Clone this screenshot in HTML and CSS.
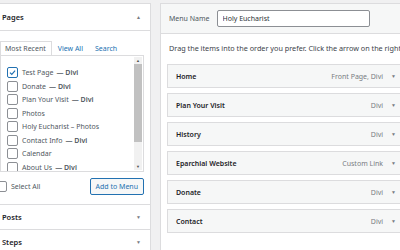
FILE: index.html
```html
<html>

<head>
  <meta content="text/html;charset=utf-8" http-equiv="Content-Type" />
  <link rel="stylesheet" href="styles.css">
</head>

<body>
  <div class="sidebar">
    <div class="section-head">
      <span class="title">Pages</span>
      <span class="caret">&#9650;</span>
    </div>

    <div class="section-body">
      <div class="tabs">
        <span class="tab active">Most Recent</span>
        <a class="tab">View All</a>
        <a class="tab">Search</a>
      </div>

      <div class="tab-panel">
        <ul class="checklist">
          <li><span class="check checked"><svg viewBox="0 0 10 10"><path d="M2.2 5.2 L4.2 7.2 L7.9 2.9" /></svg></span>Test Page <b>— Divi</b></li>
          <li><span class="check"></span>Donate <b>— Divi</b></li>
          <li><span class="check"></span>Plan Your Visit <b>— Divi</b></li>
          <li><span class="check"></span>Photos</li>
          <li><span class="check"></span>Holy Eucharist – Photos</li>
          <li><span class="check"></span>Contact Info <b>— Divi</b></li>
          <li><span class="check"></span>Calendar</li>
          <li><span class="check"></span>About Us <b>— Divi</b></li>
        </ul>
        <div class="scrollbar">
          <span class="arrow">&#9650;</span>
          <span class="thumb"></span>
          <span class="track"></span>
          <span class="arrow">&#9660;</span>
        </div>
      </div>

      <div class="actions">
        <label class="select-all"><span class="check"></span>Select All</label>
        <button class="add">Add to Menu</button>
      </div>
    </div>

    <div class="section-head closed">
      <span class="title">Posts</span>
      <span class="caret">&#9660;</span>
    </div>
    <div class="section-head closed">
      <span class="title">Steps</span>
      <span class="caret">&#9660;</span>
    </div>
  </div>

  <div class="editor">
    <div class="editor-head">
      <label class="name-label">Menu Name</label>
      <input class="name-input" type="text" value="Holy Eucharist" />
    </div>

    <div class="editor-body">
      <p class="instructions">Drag the items into the order you prefer. Click the arrow on the right of the item to reveal additional configuration options.</p>

      <ul class="menu">
        <li class="item"><span class="item-title">Home</span><span class="item-type">Front Page, Divi</span><span class="caret">&#9660;</span></li>
        <li class="item"><span class="item-title">Plan Your Visit</span><span class="item-type">Divi</span><span class="caret">&#9660;</span></li>
        <li class="item"><span class="item-title">History</span><span class="item-type">Divi</span><span class="caret">&#9660;</span></li>
        <li class="item"><span class="item-title">Eparchial Website</span><span class="item-type">Custom Link</span><span class="caret">&#9660;</span></li>
        <li class="item"><span class="item-title">Donate</span><span class="item-type">Divi</span><span class="caret">&#9660;</span></li>
        <li class="item"><span class="item-title">Contact</span><span class="item-type">Divi</span><span class="caret">&#9660;</span></li>
      </ul>
    </div>
  </div>
</body>

</html>
```

FILE: styles.css
```css
html {
  font-family: "Noto Sans", "Open Sans", sans-serif;
  font-size: 7px;
  color: #3c434a;
}

body {
  margin: 0;
  padding-top: 3px;
  width: 400px;
  height: 250px;
  overflow: hidden;
  display: flex;
  align-items: flex-start;
  gap: 9px;
  background-color: #f0f0f1;
}

ul {
  list-style: none;
  margin: 0;
  padding: 0;
}

/* left column: add menu items */

.sidebar {
  flex: none;
  width: 156px;
  margin-left: -7px;
  background-color: #fff;
  border: 1px solid #dcdcde;
}

.section-head {
  display: flex;
  align-items: center;
  justify-content: space-between;
  height: 26px;
  padding: 0 9px 0 8px;
  border-bottom: 1px solid #dcdcde;
}

.section-head.closed {
  height: 24px;
}

.section-head .title {
  font-size: 7.5px;
  font-weight: 600;
  color: #1d2327;
  margin-top: -1px;
}

.caret {
  font-size: 5px;
  color: #787c82;
}

.section-body {
  padding: 11px 6px 9px 6px;
  border-bottom: 1px solid #dcdcde;
}

.tabs {
  display: flex;
  align-items: flex-end;
  height: 13px;
}

.tab {
  padding: 0 6px;
  line-height: 13px;
  color: #2271b1;
}

.tab.active {
  color: #50575e;
  background-color: #fff;
  border: 1px solid #dcdcde;
  border-bottom: none;
  padding: 0 5px 0 4px;
}

.tab-panel {
  display: flex;
  height: 115px;
  overflow: hidden;
  border: 1px solid #dcdcde;
}

.checklist {
  flex: 1;
  padding: 10px 0 0 6px;
}

.checklist li {
  display: flex;
  align-items: center;
  height: 13.5px;
  color: #50575e;
}

.checklist b {
  font-weight: 600;
  margin-left: 3px;
}

.check {
  flex: none;
  width: 9px;
  height: 9px;
  margin-right: 4px;
  border: 1px solid #8c8f94;
  border-radius: 2px;
  background-color: #fff;
}

.check.checked {
  border-color: #2271b1;
}

.check svg {
  display: block;
  width: 9px;
  height: 9px;
}

.check path {
  fill: none;
  stroke: #2271b1;
  stroke-width: 1.3;
}

.scrollbar {
  flex: none;
  display: flex;
  flex-direction: column;
  width: 8px;
  margin: 1px 1px 1px 0;
  background-color: #f1f1f1;
}

.scrollbar .arrow {
  height: 7px;
  font-size: 4px;
  line-height: 7px;
  text-align: center;
  color: #505050;
}

.scrollbar .thumb {
  height: 78px;
  background-color: #c1c1c1;
}

.scrollbar .track {
  flex: 1;
}

.actions {
  display: flex;
  align-items: center;
  justify-content: space-between;
  margin-top: 6px;
}

.select-all {
  display: flex;
  align-items: center;
  margin-left: -4px;
  color: #50575e;
}

.add {
  font-family: inherit;
  font-size: 7px;
  height: 17px;
  padding: 0 5px;
  color: #2271b1;
  background-color: #f6f7f7;
  border: 1px solid #2271b1;
  border-radius: 2px;
}

/* right column: menu structure */

.editor {
  flex: none;
  width: 250px;
  height: 247px;
  overflow: hidden;
  background-color: #fff;
  border: 1px solid #dcdcde;
  border-bottom: none;
}

.editor-head {
  display: flex;
  align-items: center;
  gap: 7px;
  height: 29px;
  padding-left: 8px;
  background-color: #f6f7f7;
  border-bottom: 1px solid #dcdcde;
}

.name-label {
  color: #50575e;
}

.name-input {
  width: 153px;
  height: 17px;
  padding: 0 5px;
  font-family: inherit;
  font-size: 7px;
  color: #2c3338;
  background-color: #fff;
  border: 1px solid #8c8f94;
  border-radius: 2px;
}

.editor-body {
  padding: 0 0 0 6px;
}

.instructions {
  margin: 9px 0 11px 2px;
  font-size: 7.25px;
  white-space: nowrap;
  color: #3c434a;
}

.menu {
  display: flex;
  flex-direction: column;
  gap: 5px;
}

.item {
  display: flex;
  align-items: center;
  width: 220px;
  height: 22px;
  padding: 0 8px;
  background-color: #f6f7f7;
  border: 1px solid #dcdcde;
}

.item-title {
  flex: 1;
  font-weight: 600;
  color: #1d2327;
}

.item-type {
  color: #787c82;
  margin-right: 8px;
}
```
